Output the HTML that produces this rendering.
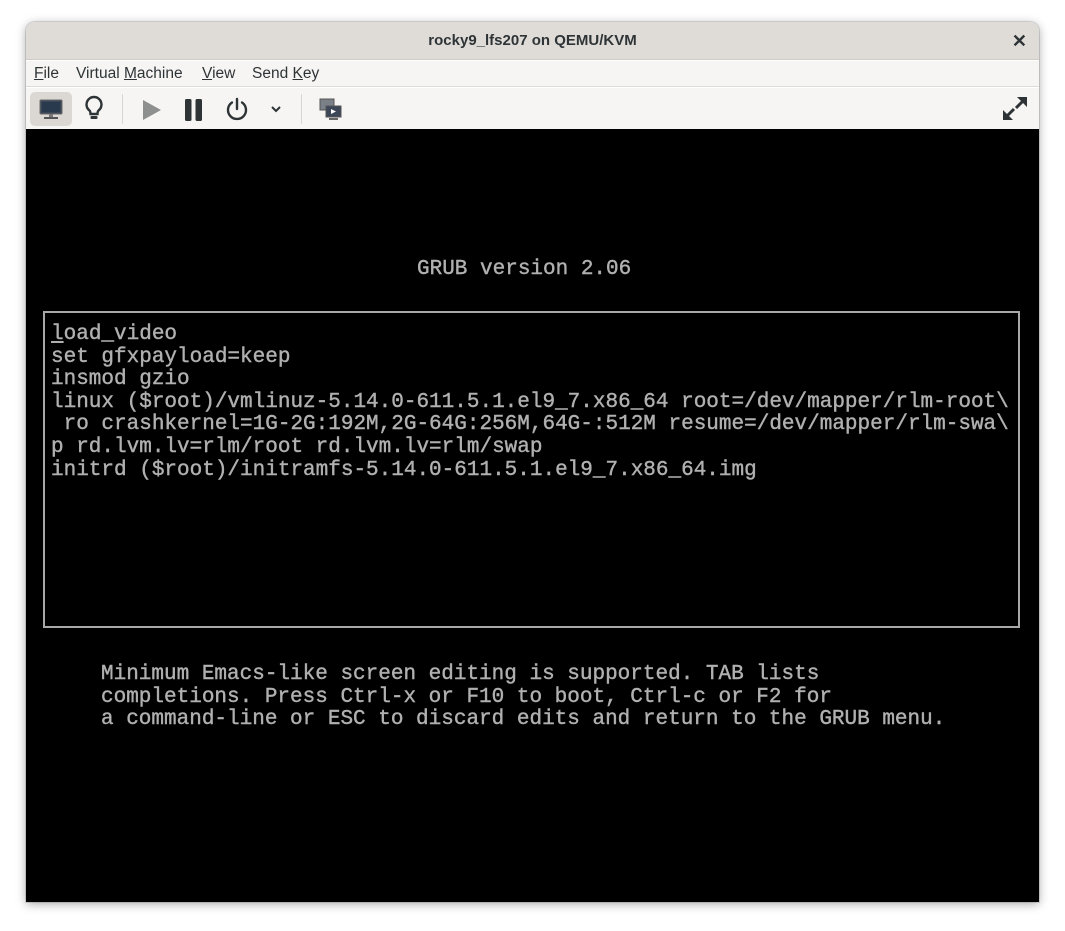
<!DOCTYPE html>
<html><head><meta charset="utf-8"><style>
*{margin:0;padding:0;box-sizing:border-box}
body{width:1065px;height:931px;background:#fff;position:relative;overflow:hidden;font-family:"Liberation Sans",sans-serif}
.win{position:absolute;left:26px;top:22px;width:1013px;height:880px;border-radius:9px 9px 0 0;overflow:hidden;box-shadow:0 2px 10px rgba(0,0,0,.35),0 0 0 1px rgba(0,0,0,.12)}
.title{position:absolute;left:0;top:0;width:100%;height:38px;background:#dfdcd8;border-bottom:1px solid #cfcbc7;text-align:center;font-size:15px;font-weight:bold;color:#2e3436;line-height:38px}
.close{position:absolute;right:12px;top:0;font-size:18px;font-weight:bold;color:#2e3436}
.menu{position:absolute;left:0;top:39px;width:100%;height:26px;background:#f6f5f4;border-bottom:1px solid #dcd9d6;font-size:15.5px;color:#2e3436}
.menu span{position:absolute;top:4px}
.menu u{text-decoration:underline}
.tb{position:absolute;left:0;top:66px;width:100%;height:41px;background:#f6f5f4}
.vm{position:absolute;left:0;top:107px;width:100%;height:773px;background:#000}
.t{position:absolute;font-family:"Liberation Mono",monospace;font-size:21px;color:#b0b0b0;white-space:pre;letter-spacing:0;-webkit-text-stroke:0.4px #b0b0b0}
.box{position:absolute;left:17px;top:182px;width:977px;height:317px;border:2px solid #a8a8a8}
.sep{position:absolute;top:6px;width:1px;height:30px;background:#d8d5d2}
</style></head><body>
<div class="win">
 <div class="title">rocky9_lfs207 on QEMU/KVM<span class="close">✕</span></div>
 <div class="menu">
  <span style="left:8px"><u>F</u>ile</span>
  <span style="left:50px">Virtual <u>M</u>achine</span>
  <span style="left:176px"><u>V</u>iew</span>
  <span style="left:226px">Send <u>K</u>ey</span>
 </div>
 <div class="tb">
  <div style="position:absolute;left:4px;top:4px;width:42px;height:34px;background:#dbd8d4;border-radius:5px"></div>
  <svg style="position:absolute;left:13px;top:11px" width="24" height="22" viewBox="0 0 24 22"><rect x="1" y="1" width="22" height="14" rx="1" fill="#3a4654" stroke="#6b6b6b"/><rect x="3" y="3" width="18" height="10" fill="#2a3a4e"/><rect x="10" y="15" width="4" height="3" fill="#777"/><rect x="5" y="18" width="14" height="2" fill="#555"/></svg>
  <svg style="position:absolute;left:58px;top:7px" width="20" height="28" viewBox="0 0 20 28"><path d="M10 2a7.5 7.5 0 0 0-4.5 13.5c1 .9 1 2 1 3.5h7c0-1.5 0-2.6 1-3.5A7.5 7.5 0 0 0 10 2z" fill="none" stroke="#2e3436" stroke-width="2.4"/><rect x="6.5" y="21" width="7" height="3" rx="1" fill="#2e3436"/></svg>
  <div class="sep" style="left:96px"></div>
  <svg style="position:absolute;left:115px;top:11px" width="22" height="22"><path d="M2 1L20 11L2 21Z" fill="#8e9090"/></svg>
  <svg style="position:absolute;left:158px;top:10px" width="20" height="24"><rect x="1" y="1" width="6.5" height="22" rx="1.5" fill="#2e3436"/><rect x="11.5" y="1" width="6.5" height="22" rx="1.5" fill="#2e3436"/></svg>
  <svg style="position:absolute;left:199px;top:9px" width="24" height="24" viewBox="0 0 24 24"><path d="M7 5.5A9 9 0 1 0 17 5.5" fill="none" stroke="#2e3436" stroke-width="2.4" stroke-linecap="round"/><line x1="12" y1="2" x2="12" y2="12" stroke="#2e3436" stroke-width="2.4" stroke-linecap="round"/></svg>
  <svg style="position:absolute;left:244px;top:17px" width="12" height="8"><path d="M2 2L6 6L10 2" fill="none" stroke="#2e3436" stroke-width="2"/></svg>
  <div class="sep" style="left:275px"></div>
  <svg style="position:absolute;left:293px;top:10px" width="24" height="24" viewBox="0 0 24 24"><rect x="1" y="1" width="14" height="11" fill="#7a8088" stroke="#555"/><rect x="7" y="8" width="15" height="11" fill="#3c4656" stroke="#555"/><path d="M12 11L17 13.5L12 16Z" fill="#fff"/><rect x="10" y="20" width="9" height="2" fill="#666"/></svg>
  <svg style="position:absolute;left:976px;top:7px" width="26" height="27" viewBox="0 0 26 27"><path d="M15 2H25V12Z" fill="#2e3436"/><line x1="21" y1="6" x2="14" y2="13" stroke="#2e3436" stroke-width="3"/><path d="M1 15V25H11Z" fill="#2e3436"/><line x1="5" y1="21" x2="12" y2="14" stroke="#2e3436" stroke-width="3"/></svg>
 </div>
 <div class="vm">
  <div class="t" style="left:391px;top:130px;line-height:22px">GRUB version 2.06</div>
  <div class="box"></div>
  <div class="t" style="left:25px;top:195px;line-height:22.6px"><u>l</u>oad_video
set gfxpayload=keep
insmod gzio
linux ($root)/vmlinuz-5.14.0-611.5.1.el9_7.x86_64 root=/dev/mapper/rlm-root\
 ro crashkernel=1G-2G:192M,2G-64G:256M,64G-:512M resume=/dev/mapper/rlm-swa\
p rd.lvm.lv=rlm/root rd.lvm.lv=rlm/swap
initrd ($root)/initramfs-5.14.0-611.5.1.el9_7.x86_64.img</div>
  <div class="t" style="left:75px;top:535px;line-height:22.5px">Minimum Emacs-like screen editing is supported. TAB lists
completions. Press Ctrl-x or F10 to boot, Ctrl-c or F2 for
a command-line or ESC to discard edits and return to the GRUB menu.</div>
 </div>
</div>
</body></html>
